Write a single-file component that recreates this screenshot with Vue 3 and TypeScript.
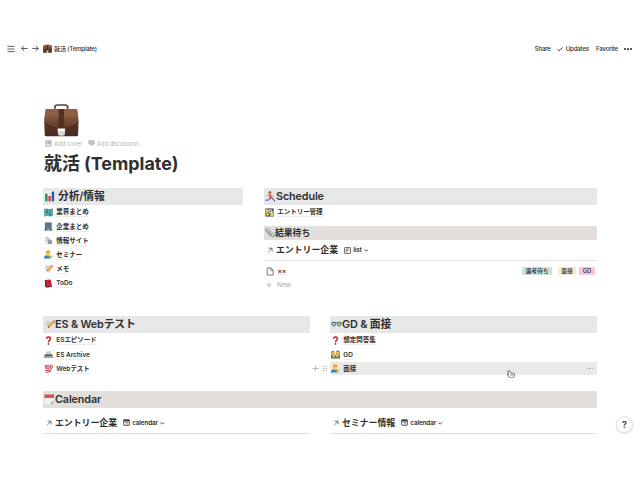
<script setup lang="ts">
interface Item { icon: string; text: string; active?: boolean }

const analysis: Item[] = [
  { icon: 'map', text: '業界まとめ' },
  { icon: 'building', text: '企業まとめ' },
  { icon: 'news', text: '情報サイト' },
  { icon: 'person', text: 'セミナー' },
  { icon: 'memo', text: 'メモ' },
  { icon: 'book', text: 'ToDo' },
]
const entrySheets: Item[] = [
  { icon: 'question', text: 'ESエピソード' },
  { icon: 'printer', text: 'ES Archive' },
  { icon: 'hundred', text: 'Webテスト' },
]
const interviews: Item[] = [
  { icon: 'question', text: '想定問答集' },
  { icon: 'family', text: 'GD' },
  { icon: 'person', text: '面接', active: true },
]

// Inner markup of every 20x20 icon
const icons: Record<string, string> = {
  menu: '<path d="M1 3.5H19M1 10H19M1 16.5H19" stroke="#555" stroke-width="2.3"/>',
  back: '<path d="M19 10H2M9 3L2 10l7 7" fill="none" stroke="#444" stroke-width="2.5"/>',
  forward: '<path d="M1 10H18M11 3l7 7-7 7" fill="none" stroke="#444" stroke-width="2.5"/>',
  check: '<path d="M1.5 10.5L7 16 18.5 4.5" fill="none" stroke="#333" stroke-width="3.2"/>',
  case: '<defs><linearGradient id="lid" x2="0" y2="1"><stop stop-color="#8f6048"/><stop offset=".3" stop-color="#85593f"/><stop offset="1" stop-color="#633c2b"/></linearGradient><linearGradient id="low" x2="0" y2="1"><stop stop-color="#5f3a2b"/><stop offset="1" stop-color="#4b2c21"/></linearGradient></defs><path d="M6.200 3V1.700Q6.300.7 7.500.6h4.600q1.300 0 1.400 1.200V3" fill="none" stroke="#5a3c33" stroke-width="1"/><path d="M5.600 2.500h1.300v1H5.600zM12.900 2.500h1.300v1h-1.300z" fill="#a88f79"/><path d="M1.200 3.300h17.500q.8 3 1 8l-.2 7.500q-.1.700-.8.700H1.200q-.7 0-.8-.7L.2 11.300q.2-5 1-8z" fill="url(#low)"/><path d="M1.500 3q-.5 0-.7.800Q.2 8 .3 11q2 2.800 7 3.500h5.300q5-.7 7-3.500.1-3-.5-7.200-.2-.8-.7-.8z" fill="url(#lid)"/><path d="M.3 11q2 2.900 7 3.600h5.300q5-.7 7-3.600" fill="none" stroke="#3f241c" stroke-width=".5"/><path d="M1.500 5.500H8M11.800 5.500h6.500M1.300 7.300H8M11.800 7.300h6.800" stroke="#ba8c50" stroke-width=".5" stroke-dasharray=".6 .9"/><path d="M8.400 3h3l.2 11.500H8.100z" fill="#55301f"/><path d="M7.700 14.800h4.500l-.3 3.500q-.2.900-1 .9H9q-.8 0-1-.9z" fill="#d6d6d6"/><path d="M8.200 15h3.500v1.500H8.200z" fill="#fff"/>',
  image: '<rect x="1" y="1" width="18" height="18" rx="3" fill="#bbb"/><path d="M3.500 15.500l4-5 3 3 2.500-3 3.500 5z" fill="#fff"/><circle cx="6.500" cy="6" r="1.800" fill="#fff"/>',
  comment: '<path d="M3 1h14q2 0 2 2v8q0 2-2 2h-4l-1 6-5-6H3q-2 0-2-2V3q0-2 2-2z" fill="#bbb"/><path d="M4 5h12M4 9h9" stroke="#ddd" stroke-width="1.200"/>',
  chart: '<rect x=".5" y=".5" width="19" height="19" fill="#f2f4f4"/><path d="M1 5h18M1 10h18M1 15h18" stroke="#ccd3d8"/><path d="M2 5h4.500v14H2z" fill="#24934d"/><path d="M8 9h4.500v10H8z" fill="#d34141"/><path d="M14 1h4.500v18H14z" fill="#1e5fba"/>',
  map: '<path d="M0 2l7-1 6 1 7-1v17l-7 1-6-1-7 1z" fill="#56afd0"/><path d="M1 3l7 1 2 5-4 4-4-5zM12 3l7 2-3 5-4-2zM10 12l5-1 2 4-5 3z" fill="#4a8950"/><path d="M2 4l4 1-2 3zM13 6l4-1-1 4z" fill="#dfbd58"/><path d="M7 2v15M13 3v15" stroke="#347086" stroke-width=".8"/>',
  building: '<path d="M2 1h15v17H2z" fill="#526578"/><path d="M4 4h11M4 7h11M4 10h11M4 13h11" stroke="#8098ac" stroke-width="1.500" stroke-dasharray="2 1"/><path d="M0 17h20v2H0z" fill="#68796a"/><path d="M8 15h3v3H8z" fill="#ddd"/>',
  news: '<path d="M2 1h8l3 4v13H2z" fill="#e2e4e4"/><path d="M4 4h5M4 7h7M4 10h5" stroke="#a9afaf" stroke-width="1.300"/><path d="M9 8h6l3 3v7H9z" fill="#8b9296"/><path d="M11 11h3M11 14h5" stroke="#c4cacc"/>',
  person: '<circle cx="9" cy="6" r="5" fill="#f5bd38"/><path d="M4 6q0-6 6-5 5 0 4 5l-3-2z" fill="#e79a20"/><path d="M0 19q0-8 8-8 7 0 8 8z" fill="#2c83b7"/><path d="M7 11l3 0v3H8z" fill="#eee"/><path d="M12 17v-4l7-1v3l-4 3z" fill="#f2b52b"/>',
  memo: '<path d="M2 2h14v17H2z" fill="#e9e5d9"/><path d="M4 6h9M4 9h9M4 12h7" stroke="#9fa9ad"/><path d="M7 16l1-4L17 3l3 2-9 10z" fill="#efa43a"/><path d="M16 4l2-2 2 3-1 2z" fill="#d96262"/><path d="M7 16l1-3 2 2z" fill="#4c4037"/>',
  book: '<path d="M2 2l13-1 3 16-12 2-3-2z" fill="#c2283a"/><path d="M2 2l2 1 2 16-3-2z" fill="#651d25"/><path d="M5 16l12-1 1 2-12 2z" fill="#822a33"/><path d="M8 5l6-1v3l-6 1z" fill="#a51e2e"/>',
  runner: '<circle cx="9" cy="3" r="2.700" fill="#dca25a"/><path d="M6 3q2-4 6-1l-3 1z" fill="#5b382b"/><path d="M6 6h5l2 7-4 1z" fill="#e34d69"/><path d="M7 7L2 9M11 7l5 4" stroke="#e7b14d" stroke-width="2"/><path d="M10 12l-3 4-6 1M12 12l3 3 3 4" fill="none" stroke="#5b59a8" stroke-width="2"/>',
  clip: '<g fill="none" stroke="#7c929f" stroke-width="1.900"><path d="M4 5l9 11q3 3 5 0 1-2-1-4L7 2Q4 0 2 2T2 6l10 12"/><path d="M6 5l8 9"/></g>',
  film: '<path d="M1 1h18v18H1z" fill="#3c4343"/><path d="M2 2l7 2-3 6-4 1zM12 11l6-2v9l-7-1z" fill="#e5cb65"/><circle cx="12" cy="7" r="4.500" fill="#d9e0d7"/><circle cx="6" cy="14" r="3.500" fill="#d0b752"/><circle cx="12" cy="7" r="1.800" fill="#44514e"/>',
  question: '<path d="M6 6q0-4 4-4 5 0 4 4 0 2-2 4-2 1-2 4" fill="none" stroke="#d7192f" stroke-width="3.300"/><circle cx="10" cy="17.500" r="2" fill="#c6142d"/>',
  printer: '<path d="M5 3h10l1 7H4z" fill="#c9cecd"/><path d="M2 9h16l2 5v4H0v-4z" fill="#858c8c"/><path d="M3 11h14v2H3z" fill="#4e5658"/><path d="M2 16h16" stroke="#bbc1c0" stroke-width="2"/>',
  hundred: '<g fill="none" stroke="#d1253f" stroke-width="2.200"><path d="M2 4l2-2v10"/><ellipse cx="9" cy="7" rx="2.600" ry="4"/><ellipse cx="16" cy="6" rx="2.600" ry="4"/><path d="M2 15.500l15-3M5 19l10-3"/></g>',
  family: '<path d="M0 19v-8q5-4 10 0 5-4 10 0v8z" fill="#3578a0"/><path d="M1 9V4q3-5 7 0v5zM12 9V3q4-4 7 1v5z" fill="#4e3930"/><g fill="#f5c23f"><circle cx="5" cy="6" r="3.500"/><circle cx="15" cy="6" r="3.500"/><circle cx="6" cy="13" r="3.300"/><circle cx="14" cy="13" r="3.300"/></g><path d="M2 19q3-5 7 0M11 19q3-5 7 0" fill="#d8a239"/>',
  glasses: '<path d="M1 7h18" stroke="#405457" stroke-width="1.500"/><path d="M1.500 7q0-1 1-1h4.500q1.500 0 1.500 2 0 5-3.500 5T1.500 7zM11.500 8q0-2 1.500-2h4.500q1 0 1 1 0 6-3.500 6t-3.500-5z" fill="#a9d0ce" stroke="#3f5557" stroke-width="1.500"/>',
  calendarEmoji: '<path d="M1 2h17v12l-4 4H1z" fill="#f0f2f1"/><path d="M1 1h17v6H1z" fill="#cf3e42"/><path d="M3 3.500h13" stroke="#eab" stroke-dasharray="2 1"/><path d="M19 12l-6 7v-3z" fill="#737979"/>',
  arrow: '<path d="M4 17L16 5M5 4h12v11" fill="none" stroke="#454545" stroke-width="2.400"/>',
  list: '<rect x="2" y="2" width="16" height="16" fill="none" stroke="#333" stroke-width="2"/><path d="M5 6h10M5 10h7M5 14h4" stroke="#444" stroke-width="2"/>',
  calendar: '<rect x="2" y="2" width="16" height="16" rx="1" fill="none" stroke="#333" stroke-width="2.400"/><path d="M2 5h16" stroke="#333" stroke-width="4"/><path d="M6 10h8M9 14h5" stroke="#555" stroke-width="2"/>',
  chevron: '<path d="M2 6l8 8 8-8" fill="none" stroke="#333" stroke-width="4"/>',
  page: '<path d="M3 1h9l6 6v12H3zM12 1v6h6" fill="none" stroke="#606060" stroke-width="2"/>',
  plus: '<path d="M10 1v18M1 10h18" stroke="#aaa" stroke-width="2.200"/>',
  grip: '<path d="M6 1v18M14 1v18" stroke="#999" stroke-width="3.500" stroke-dasharray="3.500 3.500"/>',
  hand: '<path d="M3 2q2-2 4 1l3 5q2-2 4 0 4-1 5 3l-1 5-4 4H8L1 12q0-3 4-1L2 4z" fill="#fff" stroke="#444" stroke-width="2"/><path d="M8 11h8M9 14h6" stroke="#777" stroke-width="1.500"/>',
}
</script>

<template>
  <div class="window">
    <header class="topbar">
      <svg class="menu" viewBox="0 0 20 20" v-html="icons.menu" />
      <svg class="nav" viewBox="0 0 20 20" v-html="icons.back" />
      <svg class="nav next" viewBox="0 0 20 20" v-html="icons.forward" />
      <svg class="crumb" viewBox="0 0 20 20" v-html="icons.case" />
      <span class="path">就活 (Template)</span>
      <nav class="actions">
        <span class="share">Share</span>
        <svg viewBox="0 0 20 20" v-html="icons.check" />
        <span class="updates">Updates</span>
        <span class="favorite">Favorite</span>
        <span class="dots"><i /><i /><i /></span>
      </nav>
    </header>

    <main class="page">
      <svg class="hero" viewBox="0 0 20 20" preserveAspectRatio="none" v-html="icons.case" />
      <div class="hints">
        <svg viewBox="0 0 20 20" v-html="icons.image" /><span class="cover">Add cover</span>
        <svg viewBox="0 0 20 20" v-html="icons.comment" /><span>Add discussion</span>
      </div>
      <h1>就活 (Template)</h1>

      <div class="upper">
        <section>
          <h2 class="spaced"><svg viewBox="0 0 20 20" v-html="icons.chart" /><span>分析/情報</span></h2>
          <ul>
            <li v-for="item in analysis" :key="item.text">
              <svg viewBox="0 0 20 20" v-html="icons[item.icon]" /><span>{{ item.text }}</span>
            </li>
          </ul>
        </section>
        <section>
          <h2><svg viewBox="0 0 20 20" v-html="icons.runner" /><span>Schedule</span></h2>
          <ul>
            <li><svg viewBox="0 0 20 20" v-html="icons.film" /><span>エントリー管理</span></li>
          </ul>
          <h3><svg viewBox="0 0 20 20" v-html="icons.clip" /><span>結果待ち</span></h3>
          <div class="linked results">
            <svg class="arrow" viewBox="0 0 20 20" v-html="icons.arrow" /><b>エントリー企業</b>
            <svg class="view" viewBox="0 0 20 20" v-html="icons.list" /><span>list</span>
            <svg class="chevron" viewBox="0 0 20 20" v-html="icons.chevron" />
          </div>
          <div class="record">
            <svg viewBox="0 0 20 20" v-html="icons.page" /><span class="name">××</span>
            <span class="tag green">選考待ち</span><span class="tag yellow">面接</span><span class="tag pink">GD</span>
          </div>
          <div class="new"><svg viewBox="0 0 20 20" v-html="icons.plus" /><span>New</span></div>
        </section>
      </div>

      <div class="halves">
        <section>
          <h2><svg viewBox="0 0 20 20" v-html="icons.memo" /><span>ES &amp; Webテスト</span></h2>
          <ul>
            <li v-for="item in entrySheets" :key="item.text">
              <svg viewBox="0 0 20 20" v-html="icons[item.icon]" /><span>{{ item.text }}</span>
            </li>
          </ul>
        </section>
        <section>
          <h2><svg viewBox="0 0 20 20" v-html="icons.glasses" /><span>GD &amp; 面接</span></h2>
          <ul>
            <li v-for="item in interviews" :key="item.text" :class="{ active: item.active }">
              <svg viewBox="0 0 20 20" v-html="icons[item.icon]" /><span>{{ item.text }}</span>
              <template v-if="item.active">
                <div class="handles">
                  <svg class="add" viewBox="0 0 20 20" v-html="icons.plus" />
                  <svg class="grip" viewBox="0 0 20 20" v-html="icons.grip" />
                </div>
                <div class="dots faint"><i /><i /><i /></div>
                <svg class="cursor" viewBox="0 0 20 20" v-html="icons.hand" />
              </template>
            </li>
          </ul>
        </section>
      </div>

      <h2 class="brown"><svg viewBox="0 0 20 20" v-html="icons.calendarEmoji" /><span>Calendar</span></h2>
      <div class="halves calendars">
        <div v-for="name in ['エントリー企業', 'セミナー情報']" :key="name" class="linked">
          <svg class="arrow" viewBox="0 0 20 20" v-html="icons.arrow" /><b>{{ name }}</b>
          <svg class="view" viewBox="0 0 20 20" v-html="icons.calendar" /><span>calendar</span>
          <svg class="chevron" viewBox="0 0 20 20" v-html="icons.chevron" />
        </div>
      </div>
    </main>
    <button class="help">?</button>
  </div>
</template>

<style>
body { margin: 0; background: #fff; }
</style>

<style scoped>
* { box-sizing: border-box; }
.window {
  position: relative; width: 640px; height: 480px; padding-top: 40px; overflow: hidden;
  background: #fff; color: #30302e; font-family: Inter, "Noto Sans CJK JP", sans-serif; font-size: 6.5px; line-height: 1;
}
svg { flex: none; display: block; }
.topbar { display: flex; align-items: center; height: 17px; padding: 0 8px 0 7px; white-space: nowrap; }
.topbar span { padding-top: 1px; }
.menu { width: 8px; height: 8px; }
.nav { width: 7px; height: 7px; margin-left: 6px; }
.next { margin-left: 3.5px; }
.crumb { width: 9px; height: 9px; margin: 0 2px 0 4.5px; }
.path { font-size: 6.1px; font-weight: 500; letter-spacing: -.18px; }
.actions { display: flex; align-items: center; margin-left: auto; font-size: 6.2px; font-weight: 500; letter-spacing: -.22px; }
.actions svg { width: 6px; height: 6px; margin: 1px 3px 0 6px; }
.favorite { margin: 0 6px 0 7px; }
.dots { display: flex; gap: 1px; }
.dots i { width: 2px; height: 2px; border-radius: 50%; background: #222; }
.page { width: 554px; margin: 47px 0 0 43px; }
.hero { width: 35px; height: 33px; margin-left: 1px; }
.hints { display: flex; align-items: center; height: 9px; margin: 2px 0 0 2px; color: #b7b7b5; font-size: 6.2px; letter-spacing: -.24px; }
.hints svg { width: 7px; height: 7px; margin-right: 2px; }
.hints span { padding-top: 1px; }
.cover { margin-right: 6px; }
h1 { display: flex; align-items: center; height: 24px; margin: 4px 0 0 1px; font-size: 17.9px; font-weight: 700; line-height: 1; white-space: nowrap; }
.upper { display: grid; grid-template-columns: 200px 333px; column-gap: 21px; height: 128px; margin-top: 12px; }
.halves { display: grid; grid-template-columns: 267px 267px; column-gap: 20px; }
h2 { display: flex; align-items: center; height: 17px; margin: 0; padding-left: 1px; background: #e5e7e9; font-size: 10.8px; font-weight: 600; line-height: 1; letter-spacing: -.13px; white-space: nowrap; }
h2 span { padding-top: 1px; }
h2 svg { width: 11px; height: 11px; }
.spaced svg { margin-right: 3px; }
ul { margin: 0; padding: 0; list-style: none; }
li { position: relative; display: flex; align-items: center; height: 14.2px; padding-left: 1px; font-weight: 600; letter-spacing: -.04px; white-space: nowrap; }
li > svg { width: 9px; height: 9px; margin-right: 3.3px; }
li > span { padding: 2.5px 0 .5px; border-bottom: 1px solid #ececec; }
h3 { display: flex; align-items: center; height: 14px; margin: 7px 0 0; background: #e1dedb; font-size: 8.8px; font-weight: 600; line-height: 1; }
h3 svg { width: 10px; height: 10px; margin: 0 .5px; }
h3 span { padding-top: 1px; }
.linked { display: flex; align-items: center; height: 21px; padding-left: 3px; border-bottom: 1px solid #dfdfde; font-size: 6.3px; font-weight: 600; letter-spacing: -.09px; white-space: nowrap; }
.linked b { font-size: 8.9px; font-weight: 700; letter-spacing: 0; }
.arrow { width: 6px; height: 6px; margin-right: 3px; }
.view { width: 7px; height: 7px; margin: 0 2px 0 6px; }
.chevron { width: 4.5px; height: 4.5px; margin-left: 2px; }
.record { display: flex; align-items: center; height: 20px; padding: 0 2px 0 2px; }
.record svg { width: 8px; height: 9px; margin-right: 3.5px; }
.name { padding-top: 1px; border-bottom: 1px solid #e2e2e2; font-weight: 600; }
.tag { display: grid; place-items: center; height: 8px; border-radius: 1px; font-size: 5.8px; font-weight: 500; }
.green { width: 30px; margin-left: auto; background: #cce3dc; }
.yellow { width: 18px; margin: 0 3px 0 6px; background: #fbeccb; }
.pink { width: 16px; background: #f5c5e2; }
.new { display: flex; align-items: center; height: 8px; padding-left: 2px; color: #aaa; }
.new svg { width: 6px; height: 6px; margin-right: 5px; }
.new span { padding-top: 1px; }
.active { height: 13px; margin-top: .6px; background: #e9e9e8; }
.handles { position: absolute; top: 3px; left: -18px; display: flex; gap: 3px; }
.handles svg { width: 7px; height: 7px; }
.handles .grip { width: 6px; }
.faint { margin-left: auto; margin-right: 4px; }
.faint i { width: 1.5px; height: 1.5px; background: #999; }
li > .cursor { position: absolute; top: 8px; left: 177px; width: 8px; height: 8px; margin: 0; }
.brown { margin-top: 15.4px; background: #e1dedb; }
.calendars { padding-top: 5px; }
.help { position: absolute; top: 416px; left: 616px; display: grid; place-items: center; width: 17px; height: 17px; padding: 0; border: 1px solid #e3e3e3; border-radius: 50%; background: #fff; color: #333; font: 600 9px Inter, sans-serif; box-shadow: 0 1px 2px #ddd; }
</style>
